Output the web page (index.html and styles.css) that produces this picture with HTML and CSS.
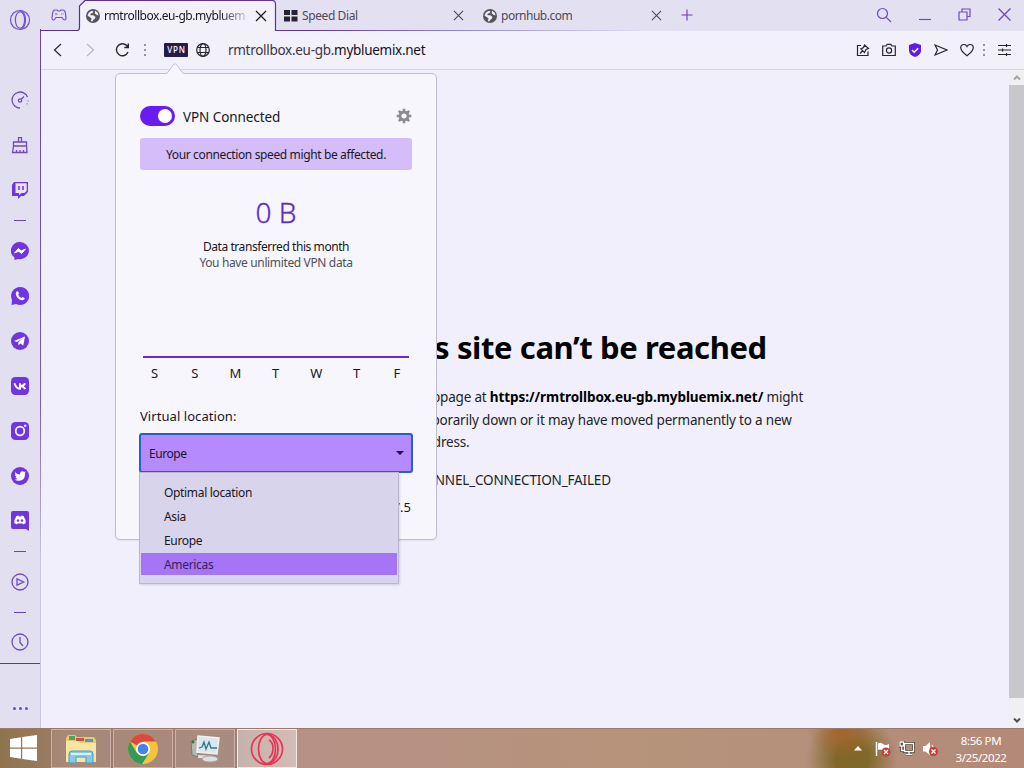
FILE: index.html
```html
<!DOCTYPE html>
<html lang="en">
<head>
<meta charset="utf-8">
<title>rmtrollbox.eu-gb.mybluemix.net</title>
<link rel="stylesheet" href="styles.css">
</head>
<body>
<svg class="defs" width="0" height="0">
  <defs>
    <symbol id="globe" viewBox="0 0 14 14"><circle cx="7" cy="7" r="7" fill="#55555c"/><path d="M1.500 6.500Q2 3.500 5 2L7.500 2.200 6.800 3.800 4.600 4.800 4.400 6.200 7.400 6.200 9.500 8 8.800 9.800 7 11 6.500 12.600 4.800 12 5.600 9.600 4 8.200ZM9 1.800L11.800 3.800 12.500 6.500 10.500 5.800 8.800 4.400Z" fill="#f0eef8"/></symbol>
    <symbol id="x" viewBox="0 0 12 12"><path d="M1 1L11 11M11 1L1 11" stroke="currentColor" stroke-width="1.2" fill="none"/></symbol>
  </defs>
</svg>
<div class="browser">
  <nav class="sidebar">
    <div class="cell logo"><svg width="22" height="22" viewBox="0 0 22 22" fill="none" stroke="#7050d0" stroke-width="1.2"><circle cx="11" cy="11" r="9.500"/><ellipse cx="11" cy="11" rx="4.600" ry="8.400"/><path d="M12 1.800Q16.500 4 16.500 11T12 20.200"/></svg></div>
    <div class="cell"><svg class="line" width="18" height="18" viewBox="0 0 18 18"><path d="M9 17A8 8 0 1 1 16.500 6M17 9.500v.8M16.300 12.500l-.3 .7"/><circle cx="9" cy="9.500" r="1.600"/><path d="M10.200 8.300L13 5.500"/></svg></div>
    <div class="cell"><svg class="line" width="18" height="18" viewBox="0 0 18 18"><path d="M7.500 6V1.700h3V6M2.500 10V6h13v4ZM2.500 10L1.500 16.500H16L15.500 10M5.500 16.500V14M9 16.500V14M12.500 16.500V14"/></svg></div>
    <div class="cell"><svg width="18" height="18" viewBox="0 0 18 18"><path d="M3 1H17V11L13 15H10L7 18V15H1V4Z" fill="#7035e0"/><path d="M4.500 2.300H15.700V10L13.500 12H10.500L8 14.200V12H4.500Z" fill="#e7e3f7"/><path d="M8 5v4M12 5v4" stroke="#7035e0" stroke-width="1.500"/></svg></div>
    <div class="sep"></div>
    <div class="cell"><svg width="18" height="18" viewBox="0 0 18 18"><path d="M9 0A9 8.600 0 1 1 7 17L3.500 18 3.300 15.300A9 8.600 0 0 1 9 0Z" fill="#7035e0"/><path d="M3.500 11L7.300 6.500 10.300 9 14.500 7 10.700 11.500 7.700 9.200Z" fill="#fff" stroke="#fff" stroke-linejoin="round"/></svg></div>
    <div class="cell"><svg width="18" height="18" viewBox="0 0 18 18"><path d="M9 0A9 9 0 1 1 5 17L.5 18 1 13A9 9 0 0 1 9 0Z" fill="#7035e0"/><path d="M5.500 4.500L7 4.200 8 6.500 7.200 7.700Q8.300 10 10.500 11L11.700 10 13.800 11.200Q13.500 13.500 11 13.300 5.500 12 4.700 6.500Z" fill="#fff"/></svg></div>
    <div class="cell"><svg width="18" height="18" viewBox="0 0 18 18"><circle cx="9" cy="9" r="9" fill="#7035e0"/><path d="M3 9L14 4.500 12.300 13.500 9.300 11.500 7.500 13.300 7.200 10.500 11.500 6.600 6 10Z" fill="#fff"/></svg></div>
    <div class="cell"><svg width="18" height="18" viewBox="0 0 18 18"><rect width="18" height="18" rx="4.500" fill="#7035e0"/><path d="M3.500 6.300Q5 11.700 9 11.700V6.300M14.200 6.300Q12.500 9 9.500 9 12.500 9.300 14.400 12" fill="none" stroke="#fff" stroke-width="2"/></svg></div>
    <div class="cell"><svg width="18" height="18" viewBox="0 0 18 18"><rect width="18" height="18" rx="4.500" fill="#7035e0"/><circle cx="9" cy="9" r="4.300" fill="none" stroke="#fff" stroke-width="1.700"/><circle cx="14.200" cy="3.800" r="1.200" fill="#fff"/></svg></div>
    <div class="cell"><svg width="18" height="18" viewBox="0 0 18 18"><circle cx="9" cy="9" r="9" fill="#7035e0"/><path d="M4 5Q6 7.500 9 7.500 9 4.300 11.500 4.300 12.500 4.300 13.200 5L14.800 4.600 14 6.500Q14.200 13.500 8 13.800 5.500 13.900 3.700 12.800 5.500 12.800 6.500 12 4.800 11.500 4.500 10L5.500 9.900Q3.900 9 3.900 7.300L5 7.500Q3.600 6.500 4 5Z" fill="#fff"/></svg></div>
    <div class="cell"><svg width="18" height="20" viewBox="0 0 18 20"><path d="M2 0H16Q18 0 18 2V20L15 18H2Q0 18 0 16V2Q0 0 2 0Z" fill="#7035e0"/><path d="M5.500 5L7.500 4.600 8 5.500H10L10.500 4.600 12.500 5Q15 8.500 14.800 12L12.300 13.500 11.500 12.400H6.500L5.700 13.500 3.200 12Q3 8.500 5.500 5Z" fill="#fff"/><circle cx="7" cy="9.500" r="1.200" fill="#7035e0"/><circle cx="11" cy="9.500" r="1.200" fill="#7035e0"/></svg></div>
    <div class="sep"></div>
    <div class="cell"><svg class="line" width="18" height="18" viewBox="0 0 18 18"><circle cx="9" cy="9" r="8"/><path d="M6 5.800L12.700 9 6 12.200Z"/></svg></div>
    <div class="sep"></div>
    <div class="cell last"><svg class="line" width="18" height="18" viewBox="0 0 18 18"><circle cx="9" cy="9" r="8"/><path d="M9 4V9.500L12 13"/></svg></div>
    <div class="more"><i></i><i></i><i></i></div>
  </nav>
  <div class="main">
    <header class="tabs">
      <svg class="outline" width="620" height="31" viewBox="0 0 620 31"><defs><linearGradient id="fade" gradientUnits="userSpaceOnUse" x1="0" y1="0" x2="600" y2="0"><stop offset="0" stop-color="#55308f"/><stop offset=".45" stop-color="#6134a0"/><stop offset=".7" stop-color="#9486cf"/><stop offset="1" stop-color="#dedaf0"/></linearGradient></defs><path d="M39 31V6L45 .5H232Q235.500 .5 235.500 4V31Z" fill="#f2f0fb"/><path d="M0 30.500H37Q39.500 30.500 39.500 28V6L45 .5H232Q235.500 .5 235.500 4V30.500H600" fill="none" stroke="url(#fade)" stroke-width="1.200"/></svg>
      <svg class="pad" width="16" height="14" viewBox="0 0 16 14" fill="none" stroke="#7650cf" stroke-width="1.200"><path d="M4 2H6L7 3H9L10 2H12Q14 2 14.500 5.500L15 10Q15 12 13.500 12 12.500 12 11 9.500H5Q3.500 12 2.500 12 1 12 1 10L1.500 5.500Q2 2 4 2ZM4 6H6.500M10 6H10.800M11.800 6H12.500"/></svg>
      <div class="tab active"><svg width="14" height="14"><use href="#globe"/></svg><span class="title t1">rmtrollbox.eu-gb.mybluem</span><svg class="close" width="12" height="12"><use href="#x"/></svg></div>
      <div class="tab"><svg width="14" height="12" viewBox="0 0 14 12"><path d="M0 0H6V5H0ZM7.500 0H13.500V5H7.500ZM0 6.500H6V11.500H0ZM7.500 6.500H13.500V11.500H7.500Z" fill="#25232d"/></svg><span class="title t2">Speed Dial</span><svg class="close" width="11" height="11" viewBox="0 0 12 12"><use href="#x"/></svg></div>
      <div class="tab third"><svg width="14" height="14"><use href="#globe"/></svg><span class="title t3">pornhub.com</span><svg class="close" width="11" height="11" viewBox="0 0 12 12"><use href="#x"/></svg></div>
      <svg class="plus" width="12" height="12" viewBox="0 0 12 12"><path d="M6 .5V11.500M.5 6H11.500" stroke="#7134c4" stroke-width="1.100"/></svg>
      <div class="window">
        <svg width="16" height="16" viewBox="0 0 16 16"><circle cx="6.500" cy="6.500" r="5"/><path d="M10.300 10.300L15 15"/></svg>
        <svg width="12" height="16" viewBox="0 0 12 16"><path d="M0 12.500H12"/></svg>
        <svg width="13" height="13" viewBox="0 0 13 13"><path d="M4 4V1H12V8.500H9M1 4H9V12H1Z"/></svg>
        <svg width="13" height="13" viewBox="0 0 12 12"><path d="M.5 .5L11.500 11.500M11.500 .5L.5 11.500"/></svg>
      </div>
    </header>
    <div class="toolbar">
      <svg width="9" height="14" viewBox="0 0 9 14"><path d="M8 1L1.500 7 8 13"/></svg>
      <svg class="fwd" width="9" height="14" viewBox="0 0 9 14"><path d="M1 1L7.500 7 1 13"/></svg>
      <svg class="reload" width="15" height="14" viewBox="0 0 15 14"><path d="M12.500 3.500A6 6 0 1 0 13 9M13.300 .5V4.500H9.300"/></svg>
      <svg class="dots d1" width="2" height="12" viewBox="0 0 2 12"><path d="M0 1H2M0 6H2M0 11H2"/></svg>
      <span class="vpn">VPN</span>
      <svg class="web" width="14" height="14" viewBox="0 0 14 14"><circle cx="7" cy="7" r="6.300"/><ellipse cx="7" cy="7" rx="3" ry="6.300"/><path d="M1.500 4.500H12.500M1.500 9.500H12.500"/></svg>
      <span class="url">rmtrollbox.eu-gb.<b>mybluemix.net</b></span>
      <div class="actions">
        <svg width="14" height="14" viewBox="0 0 14 14"><path d="M5 2.500H1.500V12.500H12V8.500M4 10.500L7 7.500M8.500 2L12.500 5.500 10 6.500 8.500 9.500 4.800 6 7.500 4.500Z"/></svg>
        <svg width="14" height="14" viewBox="0 0 14 14"><path d="M.7 3H4L5.200 1.300H8.800L10 3H13.300V12.500H.7Z"/><circle cx="7" cy="7.500" r="2.600"/></svg>
        <svg width="14" height="14" viewBox="0 0 14 14"><path d="M7 0L13 2V8Q12.500 12 7 14 1.500 12 1 8V2Z" fill="#641ce2" stroke="none"/><path d="M4 7L6.200 9.200 10.200 5.200" stroke="#fff" stroke-width="1.500"/></svg>
        <svg width="14" height="14" viewBox="0 0 14 14"><path d="M1 2L13 7 1 12 3.500 7Z"/></svg>
        <svg width="14" height="14" viewBox="0 0 14 14"><path d="M7 12.700Q.7 8 .7 4.800 .7 1.500 4 1.500 6 1.500 7 3.500 8 1.500 10 1.500 13.300 1.500 13.300 4.800 13.300 8 7 12.700Z"/></svg>
        <svg class="dots d2" width="2" height="12" viewBox="0 0 2 12"><path d="M0 1H2M0 6H2M0 11H2"/></svg>
        <svg width="13" height="12" viewBox="0 0 13 12"><path d="M0 1.500H13M0 6H13M0 10.500H13M8.500 0V3M4.500 4.500V7.500M8.500 9V12"/></svg>
      </div>
    </div>
    <div class="content">
      <article class="error">
        <h1>This site can’t be reached</h1>
        <p><span class="l1">The webpage at <b>https://rmtrollbox.eu-gb.mybluemix.net/</b> might</span><br><span class="l2">be temporarily down or it may have moved permanently to a new</span><br><span class="l3">web address.</span></p>
        <p class="code">ERR_TUNNEL_CONNECTION_FAILED</p>
      </article>
      <div class="scroll"><svg width="8" height="5" viewBox="0 0 8 5"><path d="M1 4.500L4 1.500 7 4.500" stroke="#a5a5a8" stroke-width="2" fill="none"/></svg><div class="thumb"></div><svg width="8" height="5" viewBox="0 0 8 5"><path d="M1 .5L4 3.500 7 .5" stroke="#505054" stroke-width="2" fill="none"/></svg></div>
      <section class="popup">
        <svg class="arrow" width="18" height="12" viewBox="0 0 18 12"><path d="M0 12V11Q2 10 3.500 7L7.500 1.500Q9 0 10.500 1.500L14.500 7Q16 10 18 11V12Z" fill="#f7f6fc"/><path d="M0 10.500Q2 10 3.500 7L7.500 1.500Q9 0 10.500 1.500L14.500 7Q16 10 18 10.500" fill="none" stroke="#c2bfd2"/></svg>
        <div class="status"><span class="switch"><i></i></span><span class="connected">VPN Connected</span><svg width="16" height="16" viewBox="-8 -8 16 16"><circle r="4" fill="none" stroke="#8c8b93" stroke-width="2.800"/><path d="M0-7.300V-4M0 7.300V4M-7.300 0H-4M7.300 0H4M-5.200-5.200L-3-3M5.200 5.200L3 3M-5.200 5.200L-3 3M5.200-5.200L3-3" stroke="#8c8b93" stroke-width="2.600"/></svg></div>
        <div class="notice"><span>Your connection speed might be affected.</span></div>
        <div class="amount">0 B</div>
        <div class="data">Data transferred this month</div>
        <div class="data unlimited">You have unlimited VPN data</div>
        <div class="days"><span>S</span><span>S</span><span>M</span><span>T</span><span>W</span><span>T</span><span>F</span></div>
        <div class="label">Virtual location:</div>
        <div class="select"><span>Europe</span><svg width="8" height="4" viewBox="0 0 8 4"><path d="M0 0H8L4 4Z" fill="#201040"/></svg></div>
        <div class="ip">77.111.247.5</div>
        <ul class="menu"><li class="opt">Optimal location</li><li>Asia</li><li>Europe</li><li class="hover">Americas</li></ul>
      </section>
    </div>
  </div>
</div>
<footer class="taskbar">
  <div class="start"><svg width="27" height="26" viewBox="0 0 27 26"><path d="M0 4L11 2.200V12.500H0ZM12.200 2L27 0V12.500H12.200ZM0 13.700H11V23.800L0 22ZM12.200 13.700H27V26L12.200 24Z" fill="#fff"/></svg></div>
  <div class="app"><svg width="34" height="32" viewBox="0 0 34 32"><path d="M2 5L4 2H11L13 4H30L32 7V29H2Z" fill="#e9c874"/><path d="M5 3H11V7H5Z" fill="#4da553"/><path d="M12 5H20V8H12Z" fill="#c95341"/><path d="M21 6H29V9H21Z" fill="#4f9bc5"/><path d="M2 8H14L16 10H32V29H2Z" fill="#f7e6a1"/><path d="M5 30V21Q5 18 8 18H26Q29 18 29 21V30H22V24H12V30Z" fill="#86c9e9" stroke="#4c9bc7"/><path d="M7 21H27" stroke="#d5f2ff" stroke-width="2"/></svg></div>
  <div class="app"><svg width="30" height="30" viewBox="0 0 30 30"><circle cx="15" cy="15" r="15" fill="#f5c43c"/><path d="M15 15L2 7.500A15 15 0 0 1 28 7.500H15Z" fill="#da4b3e"/><path d="M2 7.500A15 15 0 0 0 14 30L21.500 18.500 15 22 8.500 18.500Z" fill="#359a55"/><circle cx="15" cy="15" r="7" fill="#fff"/><circle cx="15" cy="15" r="5.300" fill="#4285e8"/></svg></div>
  <div class="app"><svg width="30" height="28" viewBox="0 0 30 28"><path d="M1 6L8 4V22L2 20Z" fill="#b5b8ad" stroke="#747a70"/><circle cx="3" cy="7" r="1.500" fill="#36783d"/><path d="M8 1L29 3 27 19 7 17Z" fill="#d9e8ed" stroke="#eef3f1" stroke-width="1.500"/><path d="M9 13L12 12 14 7 16 14 19 7 21 13 27 13" fill="none" stroke="#31748f" stroke-width="1.300"/><path d="M8 20L23 21 21 23H8Z" fill="#e1e2dd"/><ellipse cx="20" cy="24" rx="8" ry="3" fill="#dedfdf" stroke="#a7a5a4"/></svg></div>
  <div class="app current"><svg width="34" height="34" viewBox="0 0 34 34" fill="none" stroke="#e93355" stroke-width="1.700"><circle cx="17" cy="17" r="15.500"/><ellipse cx="17" cy="17" rx="8.500" ry="14.500"/><path d="M19 2.500Q28 6 28 17T19 31.500M19 8Q23.500 11 23 17T19 26"/></svg></div>
  <div class="tray">
    <svg width="8" height="5" viewBox="0 0 8 5"><path d="M4 0L8 4.500H0Z" fill="#fff"/></svg>
    <svg class="flag" width="16" height="16" viewBox="0 0 16 16"><path d="M1.500 1V15" stroke="#fff" stroke-width="1.500"/><path d="M3 2.500Q5 1 8 3T14 3V9Q11 10 8 9T3 9Z" fill="#fff"/><circle cx="11" cy="11" r="4.500" fill="#c93a3a"/><path d="M9 9L13 13M13 9L9 13" stroke="#fff" stroke-width="1.400"/></svg>
    <svg class="net" width="16" height="15" viewBox="0 0 16 15"><path d="M5.500 2.500H14.500V10.500H5.500ZM10 10.500V13M6.500 13.500H13M1 1H4.500V5H1ZM2.700 5V9.500H5" fill="none" stroke="#473c34" stroke-width="2.800"/><path d="M5.500 2.500H14.500V10.500H5.500ZM10 10.500V13M6.500 13.500H13M1 1H4.500V5H1ZM2.700 5V9.500H5" fill="none" stroke="#fff" stroke-width="1.300"/></svg>
    <svg class="vol" width="16" height="16" viewBox="0 0 16 16"><path d="M0 5H2.500L7 1V14L2.500 10.500H0Z" fill="#fff"/><path d="M9 4Q10.500 6 10 8" stroke="#fff" fill="none"/><circle cx="10.500" cy="10.500" r="4.500" fill="#c93a3a"/><path d="M8.500 8.500L12.500 12.500M12.500 8.500L8.500 12.500" stroke="#fff" stroke-width="1.400"/></svg>
    <div class="clock"><span>8:56 PM</span><span>3/25/2022</span></div>
  </div>
</footer>
</body>
</html>
```
FILE: styles.css
```css
* { box-sizing: border-box; }
body { margin: 0; width: 1024px; height: 768px; overflow: hidden; display: flex; flex-direction: column; font-family: "Noto Sans", "Open Sans", sans-serif; color: #19171f; }
svg { display: block; flex: none; }
.defs { position: absolute; }
.browser { height: 728px; display: flex; background: #f1effb; }

.sidebar { width: 40px; background: #e2dff1; display: flex; flex-direction: column; }
.cell { height: 45px; display: flex; align-items: center; justify-content: center; flex: none; }
.cell.logo { height: 77px; align-items: flex-start; padding-top: 9px; }
.cell.last { height: 43px; }
.line { fill: none; stroke: #7049c0; stroke-width: 1.3; }
.sep { height: 16px; flex: none; display: flex; align-items: center; justify-content: center; }
.sep::before { content: ""; width: 12px; height: 1px; background: #6843b1; }
.more { flex: 1; border-top: 1px solid #514665; display: flex; gap: 3px; justify-content: center; padding-top: 43px; }
.more i { width: 3px; height: 3px; border-radius: 50%; background: #7049c0; }

.main { flex: 1; min-width: 0; display: flex; flex-direction: column; border-left: 1px solid; border-image: linear-gradient(#e2dff1 30px, #6b42ad 30px, #7a57b8 400px, #c9c4dc 560px) 1; }
.tabs { height: 31px; position: relative; display: flex; align-items: center; background: #e3e0f1; flex: none; }
.outline { position: absolute; left: -1px; top: 0; }
.pad { margin-left: 10px; margin-bottom: 2px; position: relative; }
.tab { width: 199px; height: 30px; display: flex; align-items: center; position: relative; font-size: 12px; color: #4d4a57; padding: 0 11px 0 8px; }
.tab.active { width: 197px; margin-left: 12px; color: #19171f; padding: 0 9px 0 7px; }
.tab.third { width: 198px; padding: 0 11px 0 8px; }
.tab .title { margin-left: 4px; white-space: nowrap; }
.tab .close { margin-left: auto; }
.t1 { letter-spacing: -0.45px; background: linear-gradient(90deg, #19171f 82%, #c4c1cf); -webkit-background-clip: text; color: transparent; }
.t2 { letter-spacing: -0.4px; }
.t3 { letter-spacing: -0.6px; }
.tab .t3 { letter-spacing: -0.5px; }
.plus { margin-left: 8px; margin-bottom: 2px; }
.window { margin-left: auto; display: flex; align-items: center; padding: 0 13px 2px 0; }
.window svg { fill: none; stroke: #7347c6; stroke-width: 1.2; margin-left: 27px; }

.toolbar { height: 39px; display: flex; align-items: center; border-bottom: 1px solid #d9d5e6; flex: none; padding-left: 12px; background: #f2f0fb; }
.toolbar svg { fill: none; stroke: #282532; stroke-width: 1.2; }
.toolbar .fwd { margin-left: 24px; stroke: #b9b6c7; }
.toolbar .reload { margin-left: 20px; stroke-width: 1.4; }
.toolbar .dots { stroke: #9693a1; stroke-width: 2; }
.d1 { margin-left: 14px; }
.vpn { margin-left: 18px; width: 24px; height: 14px; border-radius: 1px; background: #251b4d; color: #fff; font-size: 8px; font-weight: 500; line-height: 14px; text-align: center; letter-spacing: .8px; padding-left: 1px; }
.web { margin-left: 8px; }
.url { margin-left: 18px; font-size: 13.500px; color: #3a3743; letter-spacing: -0.29px; white-space: nowrap; }
.url b { font-weight: 400; color: #141219; }
.actions { margin-left: auto; display: flex; align-items: center; gap: 12px; padding-right: 13px; }
.actions .d2 { margin: 0 1px 0 -3px; }

.content { flex: 1; position: relative; display: flex; }
.error { flex: 1; padding: 252px 0 0 347px; white-space: nowrap; color: #211f28; }
.error h1 { margin: 0; font-size: 31px; line-height: 50px; font-weight: 700; color: #000; letter-spacing: -0.4px; }
.error p { margin: 14px 0 0; font-size: 13.500px; line-height: 22.500px; }
.error p b { color: #000; letter-spacing: -0.06px; }
.l1 { letter-spacing: -0.2px; }
.l2, .l3 { letter-spacing: -0.18px; }
.error .code { margin-top: 15px; font-size: 13.500px; letter-spacing: -0.16px; }
.scroll { width: 15px; background: #f0f0f2; display: flex; flex-direction: column; align-items: center; padding: 5px 0; gap: 5px; }
.thumb { align-self: stretch; height: 613px; background: #c8c7cb; margin-bottom: 15px; }

.popup { position: absolute; left: 74px; top: 3px; width: 322px; height: 467px; background: #f7f6fc; border: 1px solid #c1bed0; border-radius: 5px; box-shadow: 0 1px 2px #0001; padding: 31px 24px 0 24px; }
.arrow { position: absolute; left: 50px; top: -11px; }
.status { display: flex; align-items: center; height: 22px; }
.switch { width: 35px; height: 20px; border-radius: 10px; background: #691bf2; display: flex; justify-content: flex-end; padding: 3px; }
.switch i { width: 14px; height: 14px; border-radius: 50%; background: #fff; }
.connected { margin-left: 8px; font-size: 13.500px; padding-top: 2px; letter-spacing: -0.08px; }
.status svg { margin-left: auto; }
.notice { margin-top: 11px; height: 32px; border-radius: 3px; background: #d5bdfa; text-align: center; font-size: 12px; line-height: 34px; letter-spacing: -0.37px; }
.amount { margin-top: 22px; text-align: center; font-size: 28px; line-height: 40px; color: #5e2bc8; font-weight: 300; -webkit-text-stroke: .35px #5e2bc8; }
.data { margin-top: 7px; text-align: center; font-size: 12px; line-height: 16px; letter-spacing: -0.43px; }
.data.unlimited { margin-top: 0; color: #51505a; letter-spacing: -0.36px; }
.days { width: 266px; margin: 85px 0 0 3px; border-top: 2px solid #6a2bc8; display: flex; justify-content: space-between; padding: 5px 6px 0 5.500px; font-size: 13px; line-height: 20px; }
.days span { width: 12px; text-align: center; }
.label { margin-top: 23px; font-size: 13px; line-height: 20px; letter-spacing: .06px; }
.select { width: 274px; height: 40px; margin: 7px 0 0 -1px; border: 2px solid #285fd0; border-radius: 3px; background: #b58afd; display: flex; align-items: center; justify-content: space-between; padding: 0 7px 0 8px; font-size: 12px; letter-spacing: -0.45px; }
.ip { margin-top: 23px; text-align: right; font-size: 13px; line-height: 22px; padding-right: 1px; }
.menu { position: absolute; left: 23px; top: 398px; width: 260px; height: 112px; margin: 0; padding: 8px 1px 0; list-style: none; background: #d8d4eb; border: 1px solid #bbb7d0; box-shadow: 1px 1px 2px #0002; font-size: 12px; line-height: 24px; letter-spacing: -0.33px; }
.menu li { padding-left: 23px; height: 24px; }
.menu .hover { background: #a675f6; height: 22px; color: #372064; }

.taskbar { height: 40px; display: flex; background: radial-gradient(ellipse 34px 26px at 842px 4px, #a5642e, #a5642e00), radial-gradient(ellipse 46px 46px at 852px 30px, #7f682a 0 35%, #7f682a00), linear-gradient(90deg, #8d744e 0, #9c7c67 60px, #a17f75 240px, #b79186 300px, #b79282 440px, #b6937a 620px, #b5917c 800px, #b38978 1024px); border-top: 1px solid #9b7868; }
.start { width: 51px; display: flex; justify-content: center; align-items: center; padding: 0 4px 2px 0; }
.app { width: 60px; height: 39px; margin-right: 2px; border: 1px solid #cbb0a8; background: #ffffff18; display: flex; align-items: center; justify-content: center; }
.app.current { background: #ffffff66; border-color: #f5e9e4; }
.tray { margin-left: auto; display: flex; align-items: center; padding-right: 13px; }
.flag { margin-left: 13px; }
.net { margin-left: 8px; }
.vol { margin-left: 8px; }
.clock { width: 60px; margin-left: 12px; display: flex; flex-direction: column; text-align: center; color: #fff; font-size: 11.500px; line-height: 17px; letter-spacing: -0.4px; }
```
